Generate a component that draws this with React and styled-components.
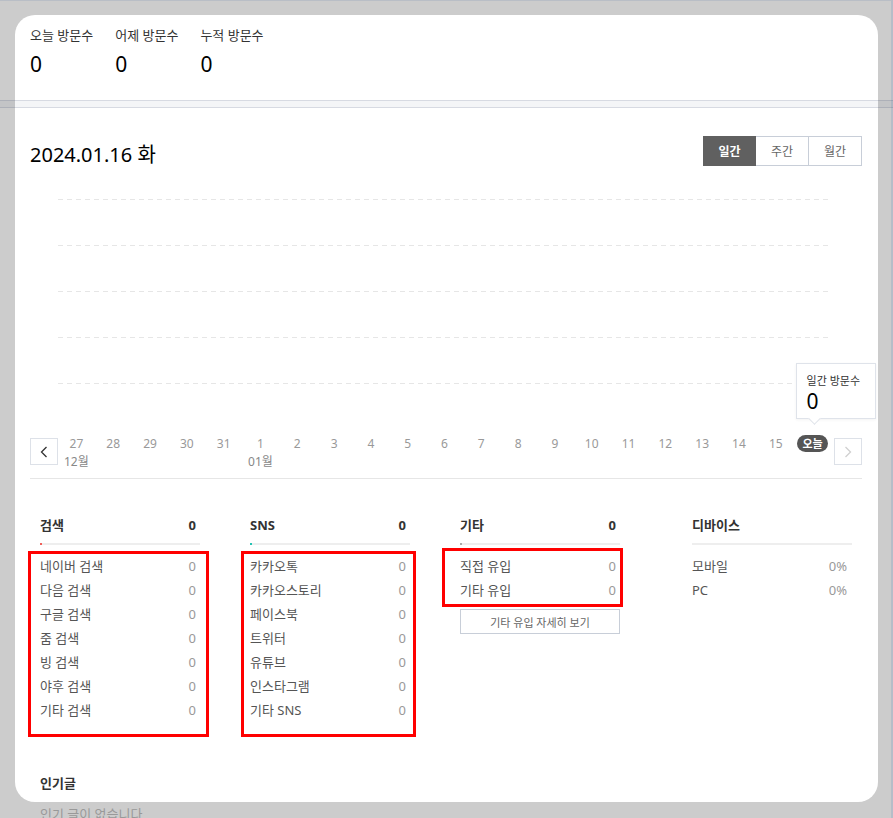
import styled, { createGlobalStyle } from "styled-components";

const GlobalStyle = createGlobalStyle`
	html, body {
		margin: 0;
		padding: 0;
		overflow: hidden;
		background: #cccccc;
	}
	body {
		font-family: "Noto Sans", "Noto Sans CJK KR", sans-serif;
	}
`;

const topStats = [
	{ label: "오늘 방문수", value: 0 },
	{ label: "어제 방문수", value: 0 },
	{ label: "누적 방문수", value: 0 }
];

const days = [27, 28, 29, 30, 31, 1, 2, 3, 4, 5, 6, 7, 8, 9, 10, 11, 12, 13, 14, 15];
const months = { 27: "12월", 1: "01월" };

const columns = [
	{
		title: "검색",
		total: "0",
		accent: "#f0605a",
		box: { top: 6, left: 12, right: 9, padTop: 0, padBottom: 12 },
		rows: ["네이버 검색", "다음 검색", "구글 검색", "줌 검색", "빙 검색", "야후 검색", "기타 검색"]
	},
	{
		title: "SNS",
		total: "0",
		accent: "#25c3b4",
		box: { top: 6, left: 9, right: 6, padTop: 0, padBottom: 12 },
		rows: ["카카오톡", "카카오스토리", "페이스북", "트위터", "유튜브", "인스타그램", "기타 SNS"]
	},
	{
		title: "기타",
		total: "0",
		accent: "#aaaaaa",
		box: { top: 3, left: 18, right: 3, padTop: 3, padBottom: 2 },
		rows: ["직접 유입", "기타 유입"],
		button: "기타 유입 자세히 보기"
	}
];

const Chevron = ({ dir, color }) => (
	<svg width="8" height="12" viewBox="0 0 8 12">
		<polyline
			points={dir === "left" ? "6.5,1 1.5,6 6.5,11" : "1.5,1 6.5,6 1.5,11"}
			fill="none"
			stroke={color}
			strokeWidth="1.3"
		/>
	</svg>
);

const App = () => {
	return (
		<Page>
			<GlobalStyle />
			<Panel>
				<TopStats>
					{topStats.map((s) => (
						<Stat key={s.label}>
							<StatLabel>{s.label}</StatLabel>
							<StatValue>{s.value}</StatValue>
						</Stat>
					))}
				</TopStats>

				<Content>
					<HeaderRow>
						<DateTitle>2024.01.16 화</DateTitle>
						<Tabs>
							<Tab active>일간</Tab>
							<Tab>주간</Tab>
							<Tab>월간</Tab>
						</Tabs>
					</HeaderRow>

					<Chart>
						{[0, 1, 2, 3, 4].map((i) => (
							<GridLine key={i} />
						))}
					</Chart>

					<Axis>
						<NavButton>
							<Chevron dir="left" color="#333" />
						</NavButton>
						<Track>
							{days.map((d) => (
								<DayCell key={d}>
									<DayNum>{d}</DayNum>
									{months[d] && <MonthLabel>{months[d]}</MonthLabel>}
								</DayCell>
							))}
							<DayCell>
								<TodayPill>오늘</TodayPill>
								<Tooltip>
									<TooltipLabel>일간 방문수</TooltipLabel>
									<TooltipValue>0</TooltipValue>
								</Tooltip>
							</DayCell>
						</Track>
						<NavButton next>
							<Chevron dir="right" color="#d0d0d0" />
						</NavButton>
					</Axis>
					<Divider />

					<Columns>
						{columns.map((c) => (
							<Column key={c.title}>
								<ColumnHead>
									<span>{c.title}</span>
									<span>{c.total}</span>
								</ColumnHead>
								<Bar accent={c.accent} />
								<MarkedList {...c.box}>
									{c.rows.map((r) => (
										<Row key={r}>
											<span>{r}</span>
											<RowValue>0</RowValue>
										</Row>
									))}
								</MarkedList>
								{c.button && <DetailButton>{c.button}</DetailButton>}
							</Column>
						))}
						<Column device>
							<ColumnHead>
								<span>디바이스</span>
							</ColumnHead>
							<Bar />
							<PlainList>
								<Row>
									<span>모바일</span>
									<RowValue>0%</RowValue>
								</Row>
								<Row>
									<span>PC</span>
									<RowValue>0%</RowValue>
								</Row>
							</PlainList>
						</Column>
					</Columns>

					<Popular>
						<ColumnHead>
							<span>인기글</span>
						</ColumnHead>
						<Empty>인기 글이 없습니다</Empty>
					</Popular>
				</Content>
			</Panel>
			<HeaderBand />
		</Page>
	);
};

export default App;

/* Styled Components */

const Page = styled.div`
	position: relative;
	width: 891px;
	height: 817px;
	border-top: 1px solid #b9bec6;
	border-right: 2px solid #b6bdc8;
`;

const HeaderBand = styled.div`
	position: absolute;
	left: 0;
	right: -2px;
	top: 99px;
	height: 6px;
	background: rgba(30, 50, 90, 0.05);
	border-top: 1px solid rgba(40, 60, 100, 0.14);
	border-bottom: 1px solid rgba(40, 60, 100, 0.14);
`;

const Panel = styled.div`
	width: 863px;
	height: 787px;
	margin: 14px 0 0 15px;
	background: #ffffff;
	border-radius: 20px;
`;

const TopStats = styled.div`
	display: flex;
	gap: 22px;
	padding: 11px 15px 0;
`;

const Stat = styled.div`
	display: flex;
	flex-direction: column;
	min-width: 60px;
`;

const StatLabel = styled.div`
	font-size: 13px;
	line-height: 18px;
	color: #333;
`;

const StatValue = styled.div`
	margin-top: 8px;
	font-size: 21px;
	line-height: 24px;
	color: #000;
`;

const Content = styled.div`
	padding: 0 16px 0 15px;
`;

const HeaderRow = styled.div`
	display: flex;
	justify-content: space-between;
	align-items: flex-start;
	margin-top: 60px;
`;

const DateTitle = styled.div`
	padding-top: 5px;
	font-size: 20px;
	line-height: 28px;
	color: #000;
`;

const Tabs = styled.div`
	display: flex;
`;

const Tab = styled.div`
	box-sizing: border-box;
	width: 53px;
	height: 30px;
	display: flex;
	align-items: center;
	justify-content: center;
	font-size: 12px;
	font-weight: ${(p) => (p.active ? 700 : 400)};
	color: ${(p) => (p.active ? "#fff" : "#666")};
	background: ${(p) => (p.active ? "#606060" : "#fff")};
	border: 1px solid ${(p) => (p.active ? "#606060" : "#c8ced8")};
	border-left-width: ${(p) => (p.active ? "1px" : "0")};
`;

const Chart = styled.div`
	display: flex;
	flex-direction: column;
	gap: 45px;
	margin: 30px 32px 0 28px;
`;

const GridLine = styled.div`
	height: 1px;
	background-image: linear-gradient(to right, #e6e6e6 55%, transparent 0);
	background-size: 9px 1px;
`;

const Axis = styled.div`
	display: flex;
	align-items: flex-start;
	margin-top: 53px;
`;

const NavButton = styled.div`
	width: 26px;
	height: 25px;
	margin: 1px 0 0 ${(p) => (p.next ? "3px" : "0")};
	display: flex;
	align-items: center;
	justify-content: center;
	border: 1px solid #dde1e8;
`;

const Track = styled.div`
	flex: 1;
	display: grid;
	grid-template-columns: repeat(21, 1fr);
`;

const DayCell = styled.div`
	position: relative;
	display: flex;
	flex-direction: column;
	align-items: center;
	height: 32px;
`;

const DayNum = styled.div`
	font-size: 12px;
	line-height: 14px;
	color: #999;
`;

const MonthLabel = styled.div`
	margin-top: 4px;
	font-size: 12px;
	line-height: 14px;
	color: #888;
	white-space: nowrap;
`;

const TodayPill = styled.div`
	margin-top: -2px;
	height: 17px;
	padding: 0 5px;
	border-radius: 9px;
	background: #555;
	color: #fff;
	font-size: 11px;
	font-weight: 700;
	line-height: 17px;
	white-space: nowrap;
`;

const Tooltip = styled.div`
	position: absolute;
	left: calc(50% - 17px);
	bottom: calc(100% + 18px);
	padding: 9px 0 5px 10px;
	box-sizing: border-box;
	width: 80px;
	background: #fff;
	border: 1px solid #dfe3ea;
	box-shadow: 0 1px 3px rgba(0, 0, 0, 0.05);

	&::after {
		content: "";
		position: absolute;
		left: 13px;
		bottom: -5px;
		width: 8px;
		height: 8px;
		background: #fff;
		border-right: 1px solid #dfe3ea;
		border-bottom: 1px solid #dfe3ea;
		transform: rotate(45deg);
	}
`;

const TooltipLabel = styled.div`
	font-size: 11px;
	line-height: 16px;
	color: #333;
	white-space: nowrap;
`;

const TooltipValue = styled.div`
	font-size: 21px;
	line-height: 24px;
	color: #000;
`;

const Divider = styled.div`
	height: 1px;
	margin-top: 9px;
	background: #e6e6e6;
`;

const Columns = styled.div`
	display: flex;
	align-items: flex-start;
	gap: 50px;
	margin-top: 37px;
	padding: 0 10px;
`;

const Column = styled.div`
	width: 160px;
	margin-left: ${(p) => (p.device ? "22px" : "0")};
`;

const ColumnHead = styled.div`
	display: flex;
	justify-content: space-between;
	padding-right: 4px;
	font-size: 13px;
	line-height: 18px;
	font-weight: 700;
	color: #333;
`;

const Bar = styled.div`
	height: 2px;
	margin-top: 9px;
	background: linear-gradient(
		to right,
		${(p) => p.accent || "#eeeeee"} 2px,
		#eeeeee 2px
	);
`;

const MarkedList = styled.div`
	margin: ${(p) => p.top}px -${(p) => p.right}px 0 -${(p) => p.left}px;
	padding: ${(p) => p.padTop}px ${(p) => p.right + 1}px ${(p) => p.padBottom}px
		${(p) => p.left - 3}px;
	border: 3px solid #ff0000;
`;

const PlainList = styled.div`
	margin-top: 9px;
	padding-right: 5px;
`;

const Row = styled.div`
	display: flex;
	justify-content: space-between;
	font-size: 13px;
	line-height: 24px;
	color: #555;
`;

const RowValue = styled.span`
	color: #999;
`;

const DetailButton = styled.div`
	margin-top: 2px;
	height: 23px;
	display: flex;
	align-items: center;
	justify-content: center;
	border: 1px solid #c8ced8;
	font-size: 11px;
	color: #666;
`;

const Popular = styled.div`
	margin-top: 37px;
	padding: 0 10px;
	width: 160px;
`;

const Empty = styled.div`
	margin-top: 13px;
	font-size: 13px;
	line-height: 18px;
	color: #999;
`;
